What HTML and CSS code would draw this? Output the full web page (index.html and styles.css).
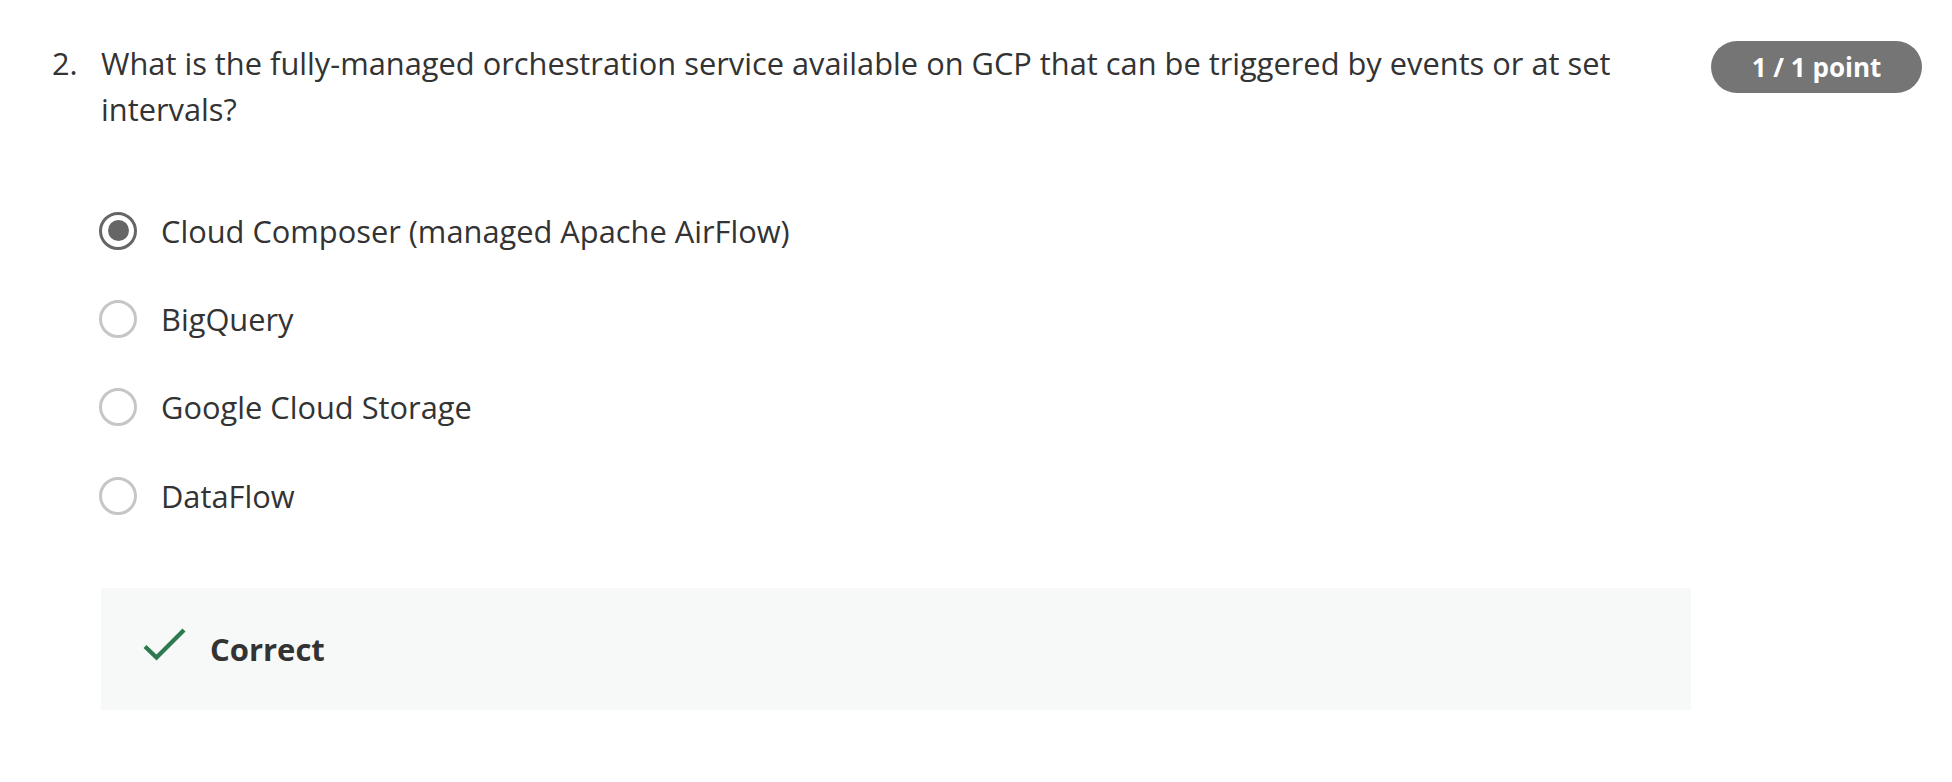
FILE: index.html
```html
<!DOCTYPE html>
<html lang="en">
<head>
<meta charset="utf-8">
<title>Quiz question</title>
<link rel="stylesheet" href="styles.css">
</head>
<body>
<div class="page">
  <div class="question">
    <div class="qnum">2.</div>
    <div class="qtext">What is the fully-managed orchestration service available on GCP that can be triggered by events or at set intervals?</div>
    <div class="badge">1 / 1 point</div>
  </div>
  <div class="options">
    <div class="option"><span class="radio checked"><span class="dot"></span></span><span class="label">Cloud Composer (managed Apache AirFlow)</span></div>
    <div class="option"><span class="radio"></span><span class="label">BigQuery</span></div>
    <div class="option"><span class="radio"></span><span class="label">Google Cloud Storage</span></div>
    <div class="option"><span class="radio"></span><span class="label">DataFlow</span></div>
  </div>
  <div class="feedback">
    <svg class="check" width="43" height="33" viewBox="0 0 43 33"><path d="M2 18.5 L13.5 29.5 L41 2" fill="none" stroke="#2e7a50" stroke-width="4.3"/></svg>
    <span class="feedback-text">Correct</span>
  </div>
</div>
</body>
</html>
```

FILE: styles.css
```css
html, body {
  margin: 0;
  padding: 0;
  background: #ffffff;
}
body {
  font-family: "Open Sans", "Liberation Sans", sans-serif;
  color: #333333;
}
.page {
  padding: 40px 30px 0 52px;
}
.question {
  display: flex;
  align-items: flex-start;
}
.qnum {
  width: 49px;
  flex: none;
  font-size: 30.8px;
  line-height: 46px;
}
.qtext {
  width: 1590px;
  flex: none;
  font-size: 30.8px;
  line-height: 46px;
}
.badge {
  margin-left: 20px;
  margin-top: 1px;
  width: 211px;
  height: 52px;
  flex: none;
  box-sizing: border-box;
  border-radius: 26px;
  background: #757575;
  color: #ffffff;
  font-weight: 700;
  font-size: 26px;
  display: flex;
  align-items: center;
  justify-content: center;
}
.options {
  margin: 79px 0 0 47px;
  display: flex;
  flex-direction: column;
  gap: 49.4px;
}
.option {
  display: flex;
  align-items: center;
  height: 39px;
  gap: 24px;
}
.radio {
  width: 38px;
  height: 38px;
  box-sizing: border-box;
  border-radius: 50%;
  border: 3.5px solid #c6c6c6;
  display: flex;
  align-items: center;
  justify-content: center;
  flex: none;
}
.radio.checked {
  border-color: #666666;
}
.dot {
  width: 21px;
  height: 21px;
  border-radius: 50%;
  background: #666666;
}
.label {
  font-size: 30.8px;
  line-height: 40px;
}
.feedback {
  margin: 73px 0 0 49px;
  width: 1590px;
  height: 122px;
  box-sizing: border-box;
  background: #f7f9f8;
  display: flex;
  align-items: center;
  padding-left: 42px;
  gap: 24px;
}
.check {
  flex: none;
  margin-top: -10px;
}
.feedback-text {
  font-size: 31px;
  font-weight: 700;
  color: #333333;
}
```
